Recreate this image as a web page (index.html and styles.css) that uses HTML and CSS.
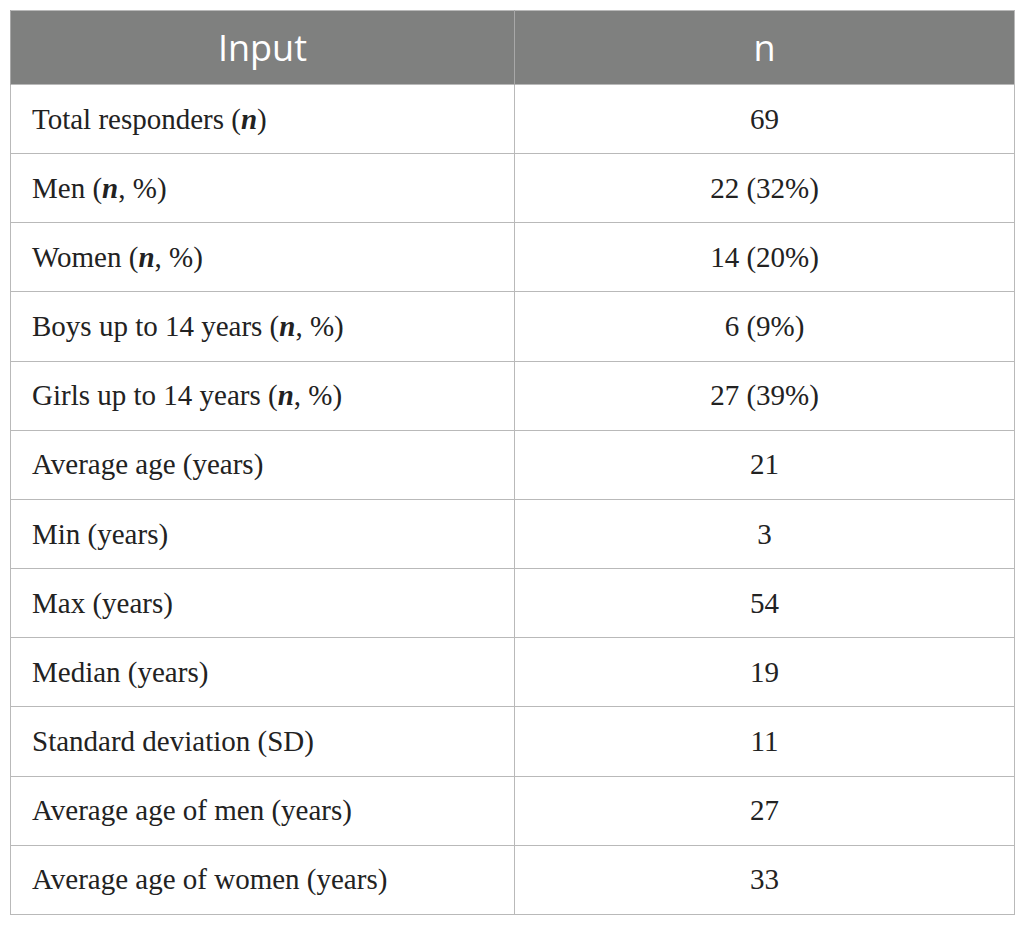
FILE: index.html
```html
<!DOCTYPE html>
<html lang="en">

<head>
    <meta charset="UTF-8">
    <meta name="viewport" content="width=device-width, initial-scale=1.0">
    <title>Responders</title>
    <link rel="stylesheet" href="styles.css">
</head>

<body>
    <table class="data-table">
        <thead>
            <tr>
                <th class="col-input">Input</th>
                <th class="col-n">n</th>
            </tr>
        </thead>
        <tbody>
            <tr><td>Total responders (<b><i>n</i></b>)</td><td>69</td></tr>
            <tr><td>Men (<b><i>n</i></b>, %)</td><td>22 (32%)</td></tr>
            <tr><td>Women (<b><i>n</i></b>, %)</td><td>14 (20%)</td></tr>
            <tr><td>Boys up to 14 years (<b><i>n</i></b>, %)</td><td>6 (9%)</td></tr>
            <tr><td>Girls up to 14 years (<b><i>n</i></b>, %)</td><td>27 (39%)</td></tr>
            <tr><td>Average age (years)</td><td>21</td></tr>
            <tr><td>Min (years)</td><td>3</td></tr>
            <tr><td>Max (years)</td><td>54</td></tr>
            <tr><td>Median (years)</td><td>19</td></tr>
            <tr><td>Standard deviation (SD)</td><td>11</td></tr>
            <tr><td>Average age of men (years)</td><td>27</td></tr>
            <tr><td>Average age of women (years)</td><td>33</td></tr>
        </tbody>
    </table>
</body>

</html>
```

FILE: styles.css
```css
body {
    margin: 10px;
    background-color: #fff;
}

.data-table {
    border-collapse: collapse;
    width: 1005px;
    table-layout: fixed;
    border: 1px solid #b9b9b9;
}

.data-table th {
    background-color: #7f807f;
    color: #fff;
    font-family: 'Open Sans', sans-serif;
    font-weight: normal;
    font-size: 36px;
    height: 73px;
    padding: 0;
    text-align: center;
    border-left: 1px solid #a8a8a8;
}

.col-input {
    width: 503px;
}

.data-table td {
    font-family: 'Liberation Serif', serif;
    font-size: 29px;
    color: #222;
    height: 68.17px;
    padding: 0 0 0 21px;
    border: 1px solid #b9b9b9;
}

.data-table td:last-child {
    text-align: center;
    padding: 0;
}
```
